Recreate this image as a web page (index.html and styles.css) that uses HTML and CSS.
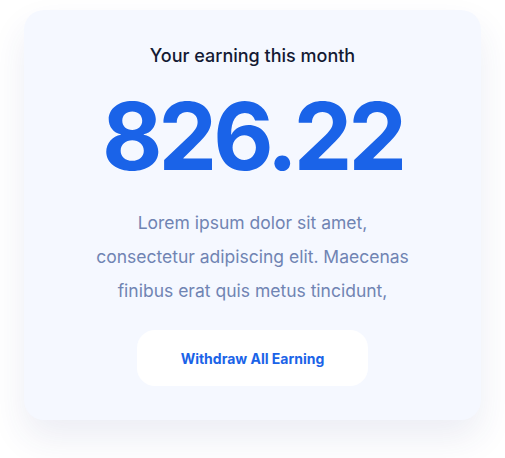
FILE: index.html
```html
<!DOCTYPE html>
<html>
<head>
<meta charset="utf-8">
<link rel="stylesheet" href="styles.css">
</head>
<body>
<div class="card">
  <div class="title">Your earning this month</div>
  <div class="amount">826.22</div>
  <p class="desc">Lorem ipsum dolor sit amet,<br>consectetur adipiscing elit. Maecenas<br>finibus erat quis metus tincidunt,</p>
  <button class="btn">Withdraw All Earning</button>
</div>
</body>
</html>
```
FILE: styles.css
```css
html, body {
  margin: 0;
  padding: 0;
  background: #ffffff;
}
body {
  font-family: Inter, "Noto Sans", sans-serif;
  padding: 10px 24px 38px;
  width: 457px;
}
.card {
  width: 457px;
  height: 410px;
  box-sizing: border-box;
  background: #f5f8ff;
  border-radius: 20px;
  box-shadow: 0 18px 36px rgba(40, 60, 130, 0.09);
  display: flex;
  flex-direction: column;
  align-items: center;
  padding-top: 34px;
}
.title {
  font-size: 18px;
  font-weight: 500;
  color: #141a33;
  line-height: 24px;
}
.amount {
  margin-top: 18px;
  font-size: 93px;
  font-weight: 700;
  color: #1a63e8;
  line-height: 100px;
  letter-spacing: -4px;
}
.desc {
  margin: 20px 0 0;
  text-align: center;
  font-size: 17.5px;
  line-height: 34px;
  color: #7084b3;
}
.btn {
  margin-top: 22px;
  width: 231px;
  height: 56px;
  border: none;
  border-radius: 18px;
  background: #ffffff;
  color: #1a63e8;
  font-family: Inter, sans-serif;
  font-weight: 700;
  font-size: 14px;
}
```
